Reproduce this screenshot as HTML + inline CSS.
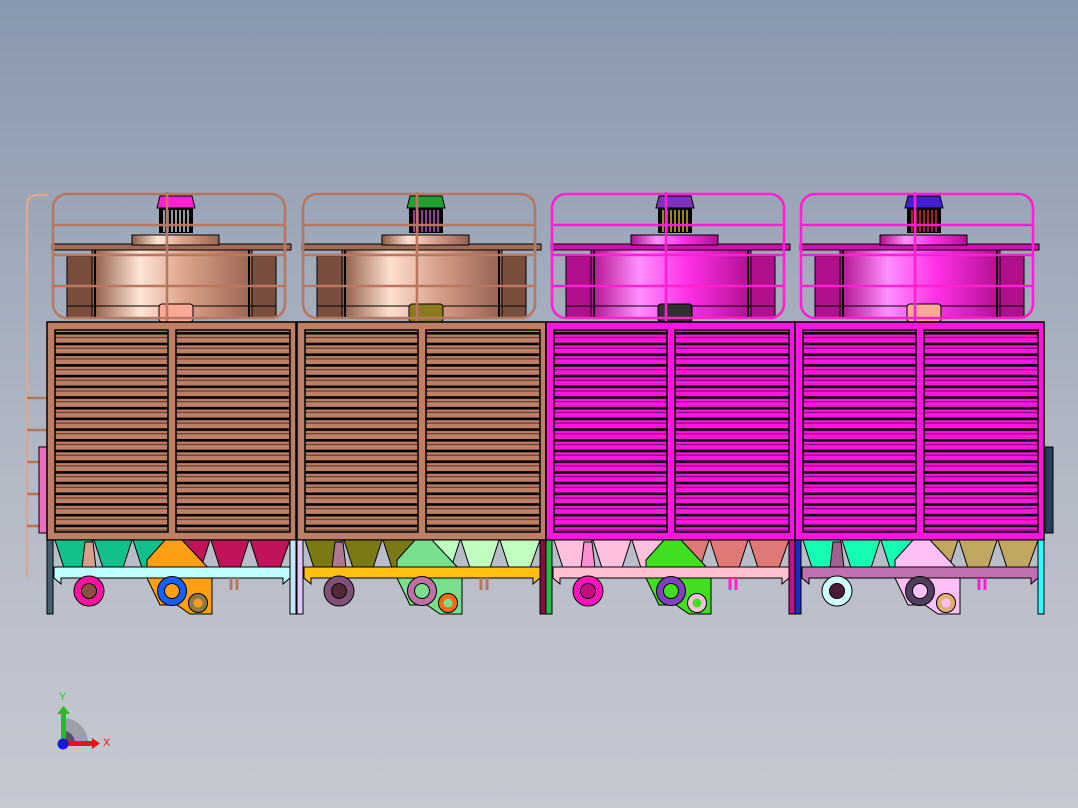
<!DOCTYPE html>
<html><head><meta charset="utf-8"><style>
html,body{margin:0;padding:0;width:1078px;height:808px;overflow:hidden}
body{background:linear-gradient(#8898ae,#b4bac6 60%,#c6c9d2)}
svg{position:absolute;left:0;top:0}
</style></head><body>
<svg width="1078" height="808" viewBox="0 0 1078 808" xmlns="http://www.w3.org/2000/svg">
<defs>
<linearGradient id="g1" x1="0" x2="1"><stop offset="0" stop-color="#8c5a44"/><stop offset=".3" stop-color="#ffe6d6"/><stop offset=".55" stop-color="#e0a88e"/><stop offset="1" stop-color="#9a6450"/></linearGradient>
<linearGradient id="g2" x1="0" x2="1"><stop offset="0" stop-color="#8c5a44"/><stop offset=".3" stop-color="#ffe0d0"/><stop offset=".6" stop-color="#d8a08a"/><stop offset="1" stop-color="#946050"/></linearGradient>
<linearGradient id="g3" x1="0" x2="1"><stop offset="0" stop-color="#b0108c"/><stop offset=".3" stop-color="#ff90ff"/><stop offset=".6" stop-color="#ff30e8"/><stop offset="1" stop-color="#b01090"/></linearGradient>
<pattern id="sl" patternUnits="userSpaceOnUse" x="0" y="331" width="10" height="10.7"><rect x="0" y="1" width="10" height="2.6" fill="#000"/><rect x="0" y="6" width="10" height="1" fill="#000" opacity=".6"/></pattern>
<g id="u">
 <rect x="5" y="244" width="239" height="6" style="fill:var(--deck)" stroke="#000"/>
 <rect x="20" y="256" width="209" height="62" style="fill:var(--dark)" stroke="#000"/>
 <rect x="45" y="250" width="160" height="68" style="fill:var(--cyl)" stroke="#000"/>
 <line x1="48" y1="250" x2="48" y2="318" stroke="#000" stroke-width="2"/>
 <line x1="202" y1="250" x2="202" y2="318" stroke="#000" stroke-width="2"/>
 <rect x="20" y="305" width="209" height="2" fill="#000" opacity=".5"/>
 <rect x="85" y="235" width="87" height="10" style="fill:var(--cyl)" stroke="#000"/>
 <rect x="112" y="207" width="34" height="26" fill="#000"/>
 <path d="M117 210V232M121 210V232M125 210V232M129 210V232M133 210V232M137 210V232M141 210V232" style="stroke:var(--stripe)" stroke-width="1.2"/>
 <path d="M113 196H145L148 208H110Z" style="fill:var(--cap)" stroke="#000"/>
 <rect x="112" y="304" width="34" height="18" rx="3" style="fill:var(--hatch)" stroke="#000"/>
 <g fill="none" style="stroke:var(--rail)" stroke-width="2.6">
  <rect x="6" y="194" width="232" height="124" rx="14"/>
  <path d="M6 225H238M6 255H238M6 286H238M120 192V322"/>
 </g>
 <rect x="0" y="322" width="249" height="218" style="fill:var(--panel)" stroke="#000" stroke-width="1.5"/>
 <rect x="8" y="330" width="113" height="202" fill="url(#sl)" stroke="#000" stroke-width="1.5"/>
 <rect x="129" y="330" width="114" height="202" fill="url(#sl)" stroke="#000" stroke-width="1.5"/>
 <g stroke="#000">
  <path d="M8 540H46L37 568H17Z" style="fill:var(--fa)"/>
  <path d="M47 540H85L76 568H56Z" style="fill:var(--fa)"/>
  <path d="M86 540H124L115 568H95Z" style="fill:var(--fa)"/>
  <path d="M125 540H163L154 568H134Z" style="fill:var(--fb)"/>
  <path d="M164 540H202L193 568H173Z" style="fill:var(--fb)"/>
  <path d="M203 540H243L233 568H212Z" style="fill:var(--fb)"/>
  <path d="M118 540H135L165 572V614H143L130 605H113L100 578V560Z" style="fill:var(--br)"/>
  <path d="M38 542L46 542L49 568H35Z" style="fill:var(--noz)"/>
  <path d="M7 567H243V578L236 584V578H14V584L7 578Z" style="fill:var(--beam)"/>
  <rect x="0" y="540" width="6" height="74" style="fill:var(--lg1)"/>
  <rect x="243" y="540" width="6" height="74" style="fill:var(--lg2)"/>
  <circle cx="42" cy="591" r="11.5" style="stroke:var(--r1)" stroke-width="7" fill="none"/>
  <circle cx="42" cy="591" r="15" fill="none"/><circle cx="42" cy="591" r="7.5" style="fill:var(--ball)"/>
  <circle cx="125" cy="591" r="11" style="stroke:var(--r2)" stroke-width="7" fill="none"/>
  <circle cx="125" cy="591" r="14.5" fill="none"/><circle cx="125" cy="591" r="7.5" fill="none"/>
  <circle cx="151" cy="603" r="7" style="stroke:var(--r3)" stroke-width="5" fill="none"/>
  <circle cx="151" cy="603" r="9.5" fill="none"/>
  <path d="M184 578V590M190 578V590" style="stroke:var(--rail)" stroke-width="3"/>
 </g>
</g>
</defs>
<!-- ladder -->
<g stroke="#d8a890" stroke-width="2.5" fill="none">
 <path d="M27 577V206Q27 195 38 195H48"/>
 <path d="M27 398H47M27 430H47M27 462H47M27 494H47M27 526H47" stroke="#b07858"/>
</g>
<rect x="39" y="447" width="8" height="86" fill="#e870c0" stroke="#000"/>
<rect x="1045" y="447" width="8" height="86" fill="#2a3a60" stroke="#000"/>
<use href="#u" x="47" style="--panel:#bd7f66;--cyl:url(#g1);--dark:#7a4e3c;--deck:#a06c58;--rail:#b87860;--stripe:#fff;--cap:#ff20d0;--hatch:#ffa898;--fa:#12c08c;--fb:#c0145a;--br:#ffa014;--beam:#c0ffff;--noz:#d8a088;--lg1:#46606e;--lg2:#c0e8ff;--r1:#ff14a0;--ball:#8a5040;--r2:#1460ff;--r3:#8a7a50"/>
<use href="#u" x="297" style="--panel:#bd7f66;--cyl:url(#g2);--dark:#7a4e3c;--deck:#a06c58;--rail:#b87860;--stripe:#ff60ff;--cap:#20a030;--hatch:#8a7a20;--fa:#7a7a14;--fb:#c0ffc0;--br:#78e08c;--beam:#ffc014;--noz:#b07890;--lg1:#e0c8ff;--lg2:#801040;--r1:#805078;--ball:#502838;--r2:#c070a8;--r3:#ff6a14"/>
<use href="#u" x="546" style="--panel:#ff14e0;--cyl:url(#g3);--dark:#b0108c;--deck:#d010b0;--rail:#ff20d0;--stripe:#ffe020;--cap:#8030c0;--hatch:#303030;--fa:#ffc0e0;--fb:#e07878;--br:#40e020;--beam:#ffc0d0;--noz:#ff90d0;--lg1:#20c040;--lg2:#c01090;--r1:#ff14c0;--ball:#c01080;--r2:#8040c0;--r3:#ffc0e0"/>
<use href="#u" x="795" style="--panel:#ff14e0;--cyl:url(#g3);--dark:#b0108c;--deck:#d010b0;--rail:#ff20d0;--stripe:#ff4040;--cap:#4020d0;--hatch:#ffa898;--fa:#14ffb4;--fb:#c0a860;--br:#ffc0f8;--beam:#c070b0;--noz:#a06090;--lg1:#1430c0;--lg2:#30ffff;--r1:#d0ffff;--ball:#501838;--r2:#504060;--r3:#e0b070"/>
<!-- axis triad -->
<path d="M63 743V718A25 25 0 0 1 88 743Z" fill="#8a8e96" opacity=".7"/>
<path d="M63 743V731A12 12 0 0 1 75 743Z" fill="#50545c"/>
<rect x="61" y="712" width="5" height="31" fill="#20c020"/>
<path d="M57 714L63.5 706L70 714Z" fill="#20c020"/>
<rect x="63" y="741" width="30" height="5" fill="#e01818"/>
<path d="M92 738L100 743.5L92 749Z" fill="#e01818"/>
<circle cx="63" cy="744" r="5.5" fill="#1818e0"/>
<text x="59" y="700" font-family="Liberation Sans,sans-serif" font-size="11" fill="#20d020">Y</text>
<text x="103" y="746" font-family="Liberation Sans,sans-serif" font-size="11" fill="#e01818">X</text>
</svg>
</body></html>
